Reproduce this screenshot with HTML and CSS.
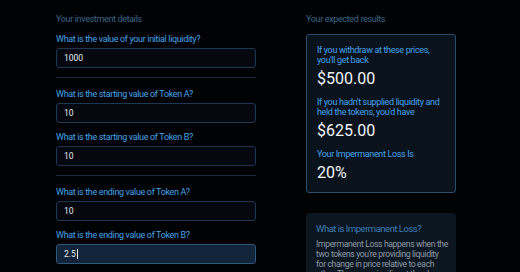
FILE: index.html
```html
<!DOCTYPE html>
<html lang="en">
<head>
    <meta charset="UTF-8">
    <meta name="viewport" content="width=device-width, initial-scale=1.0">
    <title>Impermanent Loss Calculator</title>
    <link rel="stylesheet" href="styles.css">
</head>
<body>
    <div class="page">
        <!-- Inputs -->
        <section class="details">
            <h2 class="section-title">Your investment details</h2>

            <div class="field">
                <label for="liquidity">What is the value of your initial liquidity?</label>
                <input id="liquidity" class="input" type="text" value="1000">
            </div>

            <hr class="divider">

            <div class="field">
                <label for="start-a">What is the starting value of Token A?</label>
                <input id="start-a" class="input" type="text" value="10">
            </div>
            <div class="field">
                <label for="start-b">What is the starting value of Token B?</label>
                <input id="start-b" class="input" type="text" value="10">
            </div>

            <hr class="divider">

            <div class="field">
                <label for="end-a">What is the ending value of Token A?</label>
                <input id="end-a" class="input" type="text" value="10">
            </div>
            <div class="field">
                <label for="end-b">What is the ending value of Token B?</label>
                <div class="input input-focused">2.5<span class="caret"></span></div>
            </div>
        </section>

        <!-- Results -->
        <section class="results">
            <h2 class="section-title">Your expected results</h2>

            <div class="result-card">
                <p class="result-label">If you withdraw at these prices,<br>you'll get back</p>
                <p class="result-value">$500.00</p>
                <p class="result-label">If you hadn't supplied liquidity and<br>held the tokens, you'd have</p>
                <p class="result-value">$625.00</p>
                <p class="result-label">Your Impermanent Loss Is</p>
                <p class="result-value">20%</p>
            </div>

            <div class="info-card">
                <h3>What is Impermanent Loss?</h3>
                <p>Impermanent Loss happens when the<br>two tokens you're providing liquidity<br>for change in price relative to each<br>other. The more significant the change,<br>the bigger the loss.</p>
            </div>
        </section>
    </div>
</body>
</html>
```

FILE: styles.css
```css
* {
    margin: 0;
    padding: 0;
    box-sizing: border-box;
}

body {
    font-family: Roboto, "Noto Sans", sans-serif;
    background-color: #010204;
    color: #e6ebf0;
    height: 272px;
    overflow: hidden;
}

/* Two columns */
.page {
    display: flex;
    gap: 50px;
    padding: 13px 0 0 56px;
}

.details {
    width: 200px;
    display: flex;
    flex-direction: column;
}

.results {
    width: 150px;
}

.section-title {
    font-size: 9px;
    font-weight: 400;
    line-height: 12px;
    letter-spacing: -0.35px;
    color: #3b6688;
    margin-bottom: 8px;
}

.results .section-title {
    margin-bottom: 9px;
}

/* Form fields */
.field {
    display: flex;
    flex-direction: column;
    margin-bottom: 8px;
}

.field label {
    font-size: 9px;
    line-height: 12px;
    letter-spacing: -0.35px;
    color: #46a2ea;
    margin-bottom: 3px;
}

.input {
    height: 20px;
    width: 100%;
    background-color: #05090f;
    border: 1px solid #1e3853;
    border-radius: 3px;
    color: #e6ebf0;
    font-family: inherit;
    font-size: 8.5px;
    padding: 0 7px;
    outline: none;
    display: flex;
    align-items: center;
}

.input-focused {
    background-color: #12243a;
    border-color: #2e5878;
}

.caret {
    display: inline-block;
    width: 1px;
    height: 10px;
    background-color: #e6ebf0;
    margin-left: 1px;
}

.divider {
    border: none;
    border-top: 1px solid #182a3c;
    margin: 1px 0 10px;
}

/* Results card */
.result-card {
    background-color: #0a131c;
    border: 1px solid #2a4d6c;
    border-radius: 3px;
    padding: 10px 10px 9px;
}

.result-label {
    font-size: 9px;
    line-height: 10px;
    letter-spacing: -0.35px;
    color: #47a3ea;
    margin-bottom: 4px;
}

.result-value {
    font-size: 16px;
    line-height: 20px;
    color: #f2f4f7;
    margin-bottom: 8px;
}

.result-value:last-child {
    margin-bottom: 0;
}

/* Info card */
.info-card {
    margin-top: 20px;
    background-color: #0c1620;
    border-radius: 3px;
    padding: 10px 10px;
}

.info-card h3 {
    font-size: 9.5px;
    font-weight: 400;
    line-height: 12px;
    letter-spacing: -0.5px;
    color: #3d7db3;
    margin-bottom: 4px;
}

.info-card p {
    font-size: 8.7px;
    line-height: 10px;
    letter-spacing: -0.4px;
    color: #8d98a3;
    white-space: nowrap;
}
```
